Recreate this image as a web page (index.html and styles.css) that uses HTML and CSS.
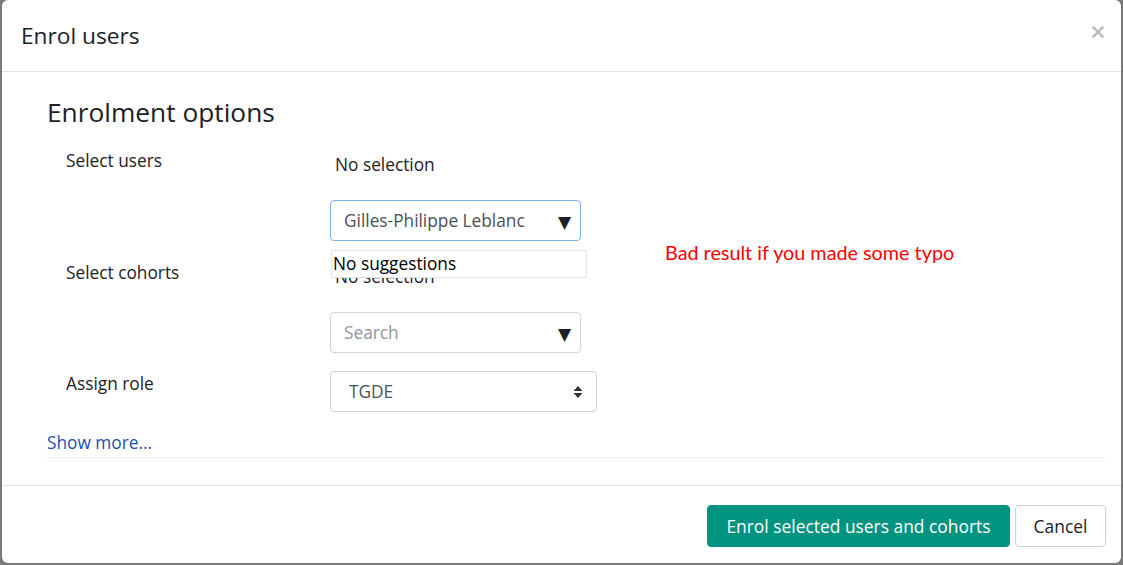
FILE: index.html
```html
<!DOCTYPE html>
<html>
<head>
<meta charset="utf-8">
<link rel="stylesheet" href="styles.css">
</head>
<body>
<div class="modal">
  <div class="modal-header">
    <h5 class="modal-title">Enrol users</h5>
    <button class="close" aria-label="Close">
      <svg width="12" height="12" viewBox="0 0 12 12"><path d="M1.5 1.5L10.5 10.5M10.5 1.5L1.5 10.5" stroke="#bdbdbd" stroke-width="2.6" stroke-linecap="square"/></svg>
    </button>
  </div>
  <div class="modal-body">
    <h3 class="section-title">Enrolment options</h3>
    <div class="form-row">
      <div class="form-label">Select users</div>
      <div class="form-field">
        <div class="selection">No selection</div>
        <div class="autocomplete">
          <div class="input active"><span class="value">Gilles-Philippe Leblanc</span><span class="caret">&#9660;</span></div>
          <div class="suggestions">No suggestions</div>
        </div>
      </div>
    </div>
    <div class="form-row">
      <div class="form-label">Select cohorts</div>
      <div class="form-field">
        <div class="selection">No selection</div>
        <div class="input"><span class="placeholder">Search</span><span class="caret">&#9660;</span></div>
      </div>
    </div>
    <div class="form-row role-row">
      <div class="form-label">Assign role</div>
      <div class="form-field">
        <div class="select"><span class="value">TGDE</span>
          <svg class="updown" width="10" height="14" viewBox="0 0 10 14"><path d="M5 1L9.5 6H0.5Z M5 13L9.5 8H0.5Z" fill="#333"/></svg>
        </div>
      </div>
    </div>
    <div class="more-row"><a class="show-more" href="#">Show more...</a></div>
    <div class="annotation">Bad result if you made some typo</div>
  </div>
  <div class="modal-footer">
    <button class="btn btn-primary">Enrol selected users and cohorts</button>
    <button class="btn btn-secondary">Cancel</button>
  </div>
</div>
</body>
</html>
```
FILE: styles.css
```css
html, body {
  margin: 0;
  padding: 0;
  height: 100%;
}
body {
  background: #7a7a7a;
  font-family: "Open Sans", "Noto Sans", sans-serif;
  color: #1d2125;
  overflow: hidden;
}
.modal {
  margin-left: 2px;
  width: 1119px;
  height: 563px;
  background: #fff;
  border-radius: 6px;
  display: flex;
  flex-direction: column;
  position: relative;
}
.modal-header {
  height: 71px;
  border-bottom: 1px solid #dee2e6;
  display: flex;
  align-items: center;
  justify-content: space-between;
  padding: 0 17px 0 19px;
}
.modal-title {
  margin: 0;
  font-size: 22.7px;
  font-weight: 400;
  line-height: 1.2;
}
.close {
  background: none;
  border: 0;
  padding: 0;
  margin-top: -8px;
  width: 12px;
  height: 12px;
  display: flex;
}
.modal-body {
  padding: 24px 16px 27px 45px;
  position: relative;
}
.section-title {
  margin: 0 0 19px;
  font-size: 26.3px;
  font-weight: 400;
  line-height: 32px;
}
.form-row {
  display: flex;
  margin-bottom: 18px;
  font-size: 17.3px;
  line-height: 26px;
}
.form-label {
  width: 264px;
  padding-left: 19px;
  padding-top: 1px;
  flex: none;
}
.form-field {
  padding-top: 5px;
}
.selection {
  margin-left: 5px;
  margin-bottom: 22px;
}
.autocomplete {
  position: relative;
}
.input {
  width: 251px;
  height: 41px;
  box-sizing: border-box;
  border: 1px solid #ced4da;
  border-radius: 4px;
  display: flex;
  align-items: center;
  justify-content: space-between;
  padding: 0 9px 0 13px;
  color: #495057;
}
.input.active {
  border-color: #7fb3e6;
}
.placeholder {
  color: #8f959e;
}
.caret {
  color: #1d2125;
  font-size: 17px;
  font-family: "DejaVu Sans", sans-serif;
  padding-top: 2px;
}
.suggestions {
  position: absolute;
  left: 1px;
  top: 50px;
  width: 256px;
  height: 28px;
  box-sizing: border-box;
  background: #fff;
  border: 1px solid #e3e3e3;
  color: #000;
  line-height: 26px;
  padding-left: 1px;
  box-shadow: 0 0 1px rgba(0,0,0,0.05);
}
.role-row .form-field {
  padding-top: 0;
}
.role-row .form-label {
  padding-top: 0;
}
.select {
  width: 267px;
  height: 41px;
  box-sizing: border-box;
  border: 1px solid #ced4da;
  border-radius: 4px;
  display: flex;
  align-items: center;
  justify-content: space-between;
  padding: 0 13px 0 18px;
  color: #495057;
}
.more-row {
  border-bottom: 1px solid #eceeef;
  height: 27px;
  line-height: 26px;
  font-size: 17.3px;
}
.show-more {
  color: #1a50ad;
  text-decoration: none;
}
.annotation {
  position: absolute;
  left: 663px;
  top: 167px;
  color: #ff0000;
  font-family: Lato, "Liberation Sans", sans-serif;
  font-size: 19.8px;
  line-height: 26px;
}
.modal-footer {
  border-top: 1px solid #dee2e6;
  padding: 19px 15px 0 0;
  display: flex;
  justify-content: flex-end;
  gap: 5px;
}
.btn {
  font-family: "Open Sans", "Noto Sans", sans-serif;
  font-size: 17.4px;
  height: 42px;
  border-radius: 4px;
  padding: 0 16px;
  line-height: 40px;
}
.btn-primary {
  background: #00937f;
  border: 1px solid #00937f;
  color: #fff;
  width: 303px;
}
.btn-secondary {
  background: #fff;
  border: 1px solid #cfcfcf;
  color: #1d2125;
  width: 91px;
}
```
